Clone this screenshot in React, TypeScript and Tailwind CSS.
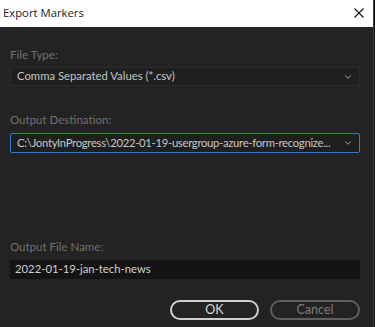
import { ChevronDown } from "lucide-react"

const font = { fontFamily: "Lato, 'Open Sans', sans-serif" }

function Label({ children }: { children: string }) {
  return <div className="text-[11.5px] leading-[16px] text-[#6f6f6f]">{children}</div>
}

export default function App() {
  return (
    <div className="flex h-[327px] w-[375px] bg-[#1b1b1b]" style={font}>
      <div className="flex w-[373px] flex-col">
        {/* title bar */}
        <div className="flex h-[27px] items-center justify-between bg-white pl-[3px] pr-[9px]">
          <span className="font-['Open_Sans'] text-[11.3px] text-[#1a1a1a]">Export Markers</span>
          <svg width="10" height="10" viewBox="0 0 10 10" className="mb-[1px]">
            <path d="M0.5 0.5L9.5 9.5M9.5 0.5L0.5 9.5" stroke="#111" strokeWidth="1.1" />
          </svg>
        </div>

        <div className="flex flex-1 flex-col bg-[#232323] px-[10px] pt-[20px]">
          <Label>File Type:</Label>
          <div className="mt-[4px] flex h-[19px] w-[350px] items-center justify-between border border-[#2b2b2b] bg-[#1f1f1f] pl-[6px] pr-[6px]">
            <span className="text-[11.3px] text-[#c4c4c4]">Comma Separated Values (*.csv)</span>
            <ChevronDown className="size-[10px] text-[#bbbbbb]" strokeWidth={2} />
          </div>

          <div className="mt-[26px]">
            <Label>Output Destination:</Label>
          </div>
          <div className="mt-[5px] flex h-[20px] w-[350px] items-center justify-between rounded-[2px] border border-[#2e7bd1] bg-[#1f1f1f] pl-[6px] pr-[6px]">
            <span className="whitespace-nowrap text-[11.3px] tracking-[-0.3px] text-[#c4c4c4]">
              C:\JontyInProgress\2022-01-19-usergroup-azure-form-recognize...
            </span>
            <ChevronDown className="ml-[4px] size-[10px] shrink-0 text-[#bbbbbb]" strokeWidth={2} />
          </div>

          <div className="mt-[86px]">
            <Label>Output File Name:</Label>
          </div>
          <div className="mt-[5px] flex h-[19px] w-[350px] items-center bg-[#141414] pl-[5px]">
            <span className="text-[11.3px] text-[#d0d0d0]">2022-01-19-jan-tech-news</span>
          </div>

          <div className="mt-[21px] flex justify-end gap-[11px] pr-[3px]">
            <button className="flex h-[20px] w-[89px] items-center justify-center rounded-full border-2 border-[#cfcfcf] text-[12.5px] text-[#d6d6d6]">
              OK
            </button>
            <button className="flex h-[20px] w-[90px] items-center justify-center rounded-full border-2 border-[#5f5f5f] text-[12.5px] text-[#7c7c7c]">
              Cancel
            </button>
          </div>
        </div>
      </div>
      <div className="w-[1px] bg-[#3a3a3a]" />
      <div className="w-[1px] bg-[#101010]" />
    </div>
  )
}
